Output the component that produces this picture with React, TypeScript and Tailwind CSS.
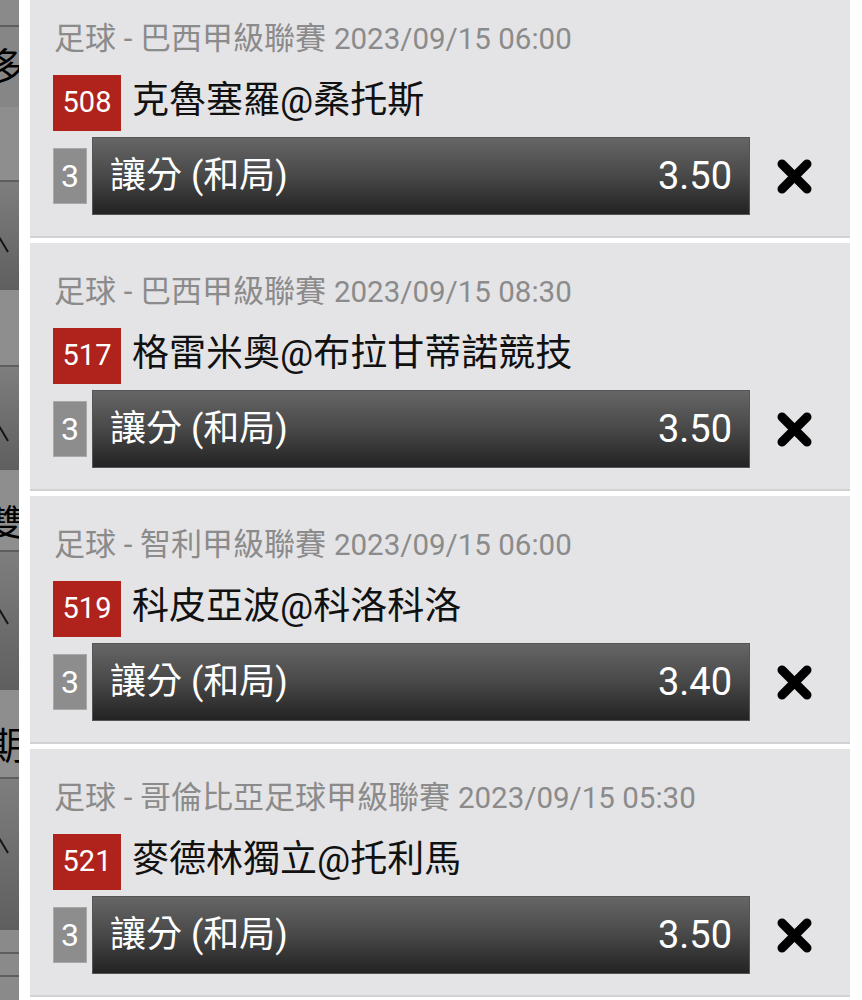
import React from "react";

interface Bet {
  league: string;
  time: string;
  code: string;
  match: string;
  market: string;
  odds: string;
}

const bets: Bet[] = [
  {
    league: "足球 - 巴西甲級聯賽",
    time: "2023/09/15 06:00",
    code: "508",
    match: "克魯塞羅@桑托斯",
    market: "讓分 (和局)",
    odds: "3.50",
  },
  {
    league: "足球 - 巴西甲級聯賽",
    time: "2023/09/15 08:30",
    code: "517",
    match: "格雷米奧@布拉甘蒂諾競技",
    market: "讓分 (和局)",
    odds: "3.50",
  },
  {
    league: "足球 - 智利甲級聯賽",
    time: "2023/09/15 06:00",
    code: "519",
    match: "科皮亞波@科洛科洛",
    market: "讓分 (和局)",
    odds: "3.40",
  },
  {
    league: "足球 - 哥倫比亞足球甲級聯賽",
    time: "2023/09/15 05:30",
    code: "521",
    match: "麥德林獨立@托利馬",
    market: "讓分 (和局)",
    odds: "3.50",
  },
];

const font = {
  fontFamily: '"Roboto", "Noto Sans CJK TC", sans-serif',
};

const Chevron = ({ top }: { top: string }) => (
  <svg width="19" height="20" viewBox="0 0 19 20" className={top}>
    <line x1="-1" y1="1" x2="8" y2="16" stroke="#151515" strokeWidth="2" />
  </svg>
);

const SideStrip: React.FC = () => (
  <div className="w-[19px] shrink-0 flex flex-col overflow-hidden text-black">
    <div className="h-[25px] bg-[#8a8a8a]" />
    <div className="h-[82px] border-t-2 border-[#5e5e5e] bg-[#868686] flex justify-end items-center overflow-hidden">
      <span className="text-[38px] leading-none whitespace-nowrap mr-[-6px]">更多</span>
    </div>
    <div className="h-[73px] bg-[#8e8e8e]" />
    <div className="h-[110px] border-t-2 border-[#5e5e5e] bg-linear-to-b from-[#7e7e7e] to-[#5f5f5f] overflow-hidden">
      <Chevron top="mt-[54px]" />
    </div>
    <div className="h-[75px] bg-[#8e8e8e]" />
    <div className="h-[105px] border-t-2 border-[#5e5e5e] bg-linear-to-b from-[#7e7e7e] to-[#5f5f5f] overflow-hidden">
      <Chevron top="mt-[58px]" />
    </div>
    <div className="h-[80px] bg-[#8e8e8e] flex justify-end items-end overflow-hidden">
      <span className="text-[36px] leading-none whitespace-nowrap mr-[-4px] mb-[8px]">單/雙</span>
    </div>
    <div className="h-[140px] border-t-2 border-[#5e5e5e] bg-linear-to-b from-[#7e7e7e] to-[#5f5f5f] overflow-hidden">
      <Chevron top="mt-[56px]" />
    </div>
    <div className="h-[87px] bg-[#8e8e8e] flex justify-end items-center overflow-hidden">
      <span className="text-[38px] leading-none whitespace-nowrap mr-[-6px] mt-[24px]">日期</span>
    </div>
    <div className="h-[151px] border-t-2 border-[#5e5e5e] bg-linear-to-b from-[#7e7e7e] to-[#5f5f5f] overflow-hidden">
      <Chevron top="mt-[58px]" />
    </div>
    <div className="h-[24px] border-t-2 border-[#5e5e5e] bg-[#8a8a8a]" />
    <div className="h-[23px] border-t-2 border-[#5e5e5e] bg-[#8a8a8a]" />
    <div className="grow border-t-2 border-[#5e5e5e] bg-[#8a8a8a]" />
  </div>
);

const BetCard: React.FC<{ bet: Bet }> = ({ bet }) => (
  <div className="h-[248px] shrink-0 bg-[#e4e4e6] border-b-2 border-[#d2d2d4] pl-[24px] pt-[31px]">
    <div className="h-[36px] flex items-center text-[#8b8b8b] whitespace-nowrap">
      <span className="text-[31px]">{bet.league}</span>
      <span className="text-[29.5px] ml-[8px]">{bet.time}</span>
    </div>
    <div className="mt-[18px] flex items-center gap-[11px]">
      <span className="h-[56px] w-[68px] ml-[-1px] bg-[#b0231c] text-white text-[29px] flex items-center justify-center">
        {bet.code}
      </span>
      <span className="text-[37px] leading-none text-[#111] mb-[6px] whitespace-nowrap">
        {bet.match}
      </span>
    </div>
    <div className="mt-[6px] flex items-center">
      <span className="h-[56px] w-[34px] ml-[-1px] bg-[#8d8d8d] border border-[#a9a9a9] text-white text-[32px] leading-none flex items-center justify-center">
        3
      </span>
      <div className="ml-[5px] h-[78px] w-[658px] border border-[#555] bg-linear-to-b from-[#666666] via-[#484848] to-[#232323] flex items-center justify-between pl-[17px] pr-[17px] text-white">
        <span className="text-[36px] leading-none">{bet.market}</span>
        <span className="text-[38px] leading-none">{bet.odds}</span>
      </div>
      <button type="button" className="ml-[27px] w-[35px] h-[35px] flex items-center justify-center">
        <svg width="35" height="35" viewBox="0 0 35 35">
          <path
            d="M5 5 L30 30 M30 5 L5 30"
            stroke="#000"
            strokeWidth="9"
            strokeLinecap="round"
          />
        </svg>
      </button>
    </div>
  </div>
);

export default function App() {
  return (
    <div className="w-[862px] h-[1000px] overflow-hidden bg-white flex" style={font}>
      <SideStrip />
      <div className="ml-[11px] w-[820px] shrink-0 mt-[-10px] flex flex-col gap-[5px]">
        {bets.map((bet, i) => (
          <BetCard key={i} bet={bet} />
        ))}
      </div>
    </div>
  );
}
